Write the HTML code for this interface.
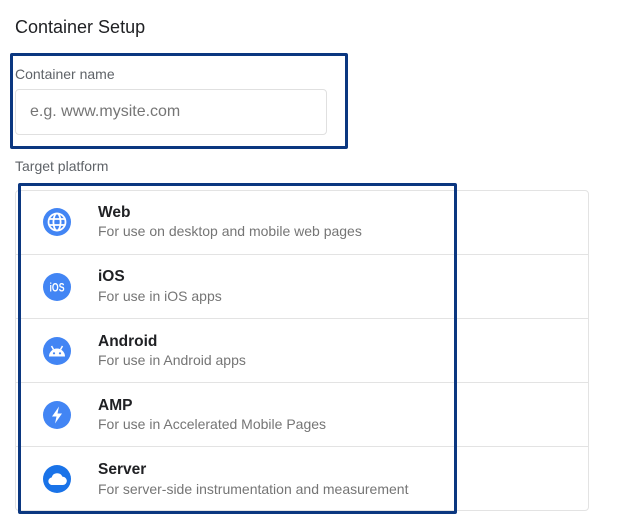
<!DOCTYPE html>
<html><head><meta charset="utf-8"><style>
*{margin:0;padding:0;box-sizing:border-box}
body{width:619px;height:520px;background:#fff;font-family:"Liberation Sans",Arial,sans-serif;position:relative;overflow:hidden;color:#202124}
.a{position:absolute}
.title{left:15px;top:17px;font-size:18px;color:#202124}
.lbl{font-size:14px;color:#5f6368}
.input{left:15px;top:89px;width:312px;height:46px;border:1px solid #e0e0e0;border-radius:4px}
.ph{left:30px;top:103px;font-size:16px;color:#757575}
.box{border:3px solid #0b3780;border-radius:2px}
.card{left:15px;top:190px;width:574px;height:321px;border:1px solid #e3e3e3;border-radius:4px}
.sep{left:15px;width:574px;height:1px;background:#e3e3e3}
.t{left:98px;font-size:15.5px;font-weight:bold;color:#202124}
.s{left:98px;font-size:14px;color:#757575}
</style></head><body>
<div class="a title">Container Setup</div>
<div class="a lbl" style="left:15px;top:66px">Container name</div>
<div class="a input"></div>
<div class="a ph">e.g. www.mysite.com</div>
<div class="a lbl" style="left:15px;top:158px">Target platform</div>
<div class="a card"></div>
<div class="a sep" style="top:254px"></div>
<div class="a sep" style="top:318px"></div>
<div class="a sep" style="top:382px"></div>
<div class="a sep" style="top:446px"></div>

<svg class="a" style="left:43px;top:208px" width="28" height="28" viewBox="0 0 28 28"><circle cx="14" cy="14" r="14" fill="#4285f4"/><g fill="none" stroke="#fff" stroke-width="1.8"><circle cx="14" cy="14" r="8.5"/><ellipse cx="14" cy="14" rx="3.6" ry="8.5"/><line x1="5.5" y1="11" x2="22.5" y2="11"/><line x1="5.5" y1="17" x2="22.5" y2="17"/></g></svg>
<div class="a t" style="top:204px">Web</div>
<div class="a s" style="top:223px">For use on desktop and mobile web pages</div>

<svg class="a" style="left:43px;top:273px" width="28" height="28" viewBox="0 0 28 28"><circle cx="14" cy="14" r="14" fill="#4285f4"/><text x="14" y="18.5" text-anchor="middle" font-family="Liberation Sans Narrow,Liberation Sans" font-weight="bold" font-size="12" fill="#fff" textLength="15" lengthAdjust="spacingAndGlyphs">iOS</text></svg>
<div class="a t" style="top:268px">iOS</div>
<div class="a s" style="top:288px">For use in iOS apps</div>

<svg class="a" style="left:43px;top:337px" width="28" height="28" viewBox="0 0 28 28"><circle cx="14" cy="14" r="14" fill="#4285f4"/><path d="M6 19.5 A8 8 0 0 1 22 19.5 Z" fill="#fff"/><line x1="8.5" y1="9" x2="10.5" y2="12.5" stroke="#fff" stroke-width="1.5"/><line x1="19.5" y1="9" x2="17.5" y2="12.5" stroke="#fff" stroke-width="1.5"/><circle cx="11" cy="16.3" r="1.1" fill="#4285f4"/><circle cx="17" cy="16.3" r="1.1" fill="#4285f4"/></svg>
<div class="a t" style="top:333px">Android</div>
<div class="a s" style="top:352px">For use in Android apps</div>

<svg class="a" style="left:43px;top:401px" width="28" height="28" viewBox="0 0 28 28"><circle cx="14" cy="14" r="14" fill="#4285f4"/><path d="M16 5.5 L9 15.5 H13.5 L12 22.5 L19 12.5 H14.5 Z" fill="#fff"/></svg>
<div class="a t" style="top:397px">AMP</div>
<div class="a s" style="top:416px">For use in Accelerated Mobile Pages</div>

<svg class="a" style="left:43px;top:465px" width="28" height="28" viewBox="0 0 28 28"><circle cx="14" cy="14" r="14" fill="#1a73e8"/><path d="M8.5 20 A3.8 3.8 0 0 1 8.6 12.5 A5.8 5.8 0 0 1 19.5 11.8 A4.1 4.1 0 0 1 20 20 Z" fill="#fff"/></svg>
<div class="a t" style="top:461px">Server</div>
<div class="a s" style="top:481px">For server-side instrumentation and measurement</div>

<div class="a box" style="left:10px;top:53px;width:338px;height:96px"></div>
<div class="a box" style="left:18px;top:183px;width:439px;height:331px"></div>
</body></html>
